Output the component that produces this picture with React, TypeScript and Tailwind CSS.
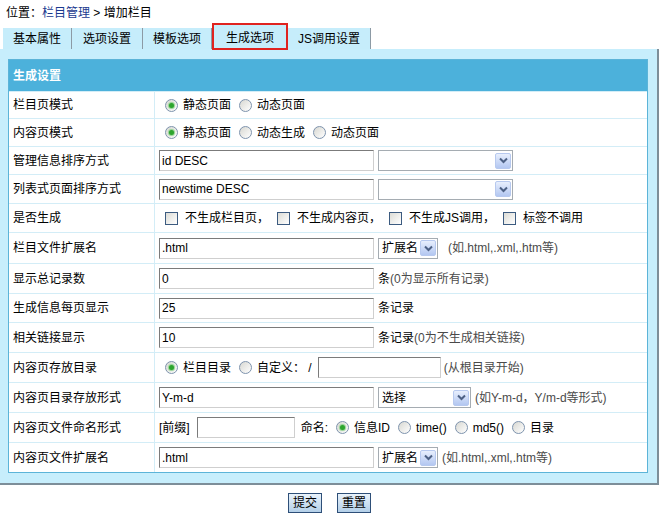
import React from "react";

const Radio = ({ checked = false }: { checked?: boolean }) => (
  <span className="inline-flex items-center justify-center w-[13px] h-[13px] rounded-full border border-[#7e93ad] bg-gradient-to-br from-[#d8d8d2] to-[#ffffff] shrink-0">
    {checked && <span className="w-[5px] h-[5px] rounded-full bg-[#2ea52e] shadow-[0_0_1px_1px_#8fd18f]" />}
  </span>
);

const Checkbox = () => (
  <span className="inline-block w-[13px] h-[13px] border border-[#3c5b80] bg-gradient-to-br from-[#dcdcd6] to-[#ffffff] shrink-0" />
);

const Chevron = () => (
  <span className="flex items-center justify-center w-[16px] h-[16px] rounded-[2px] border border-[#b7c9ef] bg-gradient-to-b from-[#e8effd] to-[#b3c7f1] shrink-0">
    <svg width="9" height="7" viewBox="0 0 9 7">
      <path d="M1 1.5 L4.5 5 L8 1.5" fill="none" stroke="#4d6185" strokeWidth="2" />
    </svg>
  </span>
);

const TextInput = ({ value = "", w }: { value?: string; w: string }) => (
  <input
    readOnly
    value={value}
    className={`${w} h-[21px] px-[2px] text-[12px] text-black bg-white border border-t-[#7b7b7b] border-l-[#7b7b7b] border-b-[#cfcfcf] border-r-[#cfcfcf] outline-none shrink-0`}
  />
);

const Select = ({ text = "", w }: { text?: string; w: string }) => (
  <span className={`${w} h-[21px] flex items-center bg-white border border-[#a5acb2] pl-[3px] pr-[1px] shrink-0`}>
    <span className="flex-1 leading-[14px]">{text}</span>
    <Chevron />
  </span>
);

const Hint = ({ children }: { children: React.ReactNode }) => (
  <span className="text-[#4a4a4a]">{children}</span>
);

const Row = ({ label, h, children }: { label: string; h: string; children: React.ReactNode }) => (
  <div className={`flex ${h} border-t border-[#d3edf7]`}>
    <div className="w-[146px] pl-[4px] flex items-center border-r border-[#d3edf7] shrink-0">{label}</div>
    <div className="flex-1 flex items-center pl-[4px]">{children}</div>
  </div>
);

const Opt = ({ checked, text, first }: { checked?: boolean; text: string; first?: boolean }) => (
  <span className={`flex items-center ${first ? "ml-[6px]" : "ml-[8px]"}`}>
    <Radio checked={checked} />
    <span className="ml-[5px] whitespace-pre">{text}</span>
  </span>
);

const Chk = ({ text, first }: { text: string; first?: boolean }) => (
  <span className={`flex items-center ${first ? "ml-[6px]" : "ml-[8px]"}`}>
    <Checkbox />
    <span className="ml-[7px]">{text}</span>
  </span>
);

const Tab = ({ text, w }: { text: string; w: string }) => (
  <div className={`${w} h-[21px] flex items-center justify-center bg-[#c6edfb] border-r border-[#8c9aa5] shadow-[1px_0_0_#ffffff]`}>
    {text}
  </div>
);

export default function App() {
  return (
    <div className="w-[664px] h-[515px] bg-white text-[12px] text-black font-['Liberation_Sans','Noto_Sans_CJK_SC',sans-serif] overflow-hidden">
      <div className="h-[23px] pl-[6px] pt-[5px] leading-[16px]">
        位置：<span className="text-[#1b3a8f]">栏目管理</span> &gt; 增加栏目
      </div>
      <div className="flex items-end h-[26px] pl-[3px]">
        <Tab text="基本属性" w="w-[69px]" />
        <Tab text="选项设置" w="w-[71px]" />
        <Tab text="模板选项" w="w-[69px]" />
        <div className="relative z-10 -mb-[1px] w-[76px] h-[27px] flex items-start justify-center pt-[4px] bg-[#c6edfb] border-2 border-[#e0231f]">
          生成选项
        </div>
        <Tab text="JS调用设置" w="w-[83px]" />
      </div>
      <div className="w-[659px] bg-[#c7eefc] border-r-2 border-b-2 border-[#7d8e99] pt-[10px] pb-[10px] pl-[8px]">
        <div className="w-[640px] border border-[#5cb4d8] bg-white">
          <div className="h-[31px] bg-[#4cb1db] text-white font-bold flex items-center pl-[4px]">生成设置</div>
          <Row label="栏目页模式" h="h-[27px]">
            <Opt first checked text="静态页面" />
            <Opt text="动态页面" />
          </Row>
          <Row label="内容页模式" h="h-[28px]">
            <Opt first checked text="静态页面" />
            <Opt text="动态生成" />
            <Opt text="动态页面" />
          </Row>
          <Row label="管理信息排序方式" h="h-[28px]">
            <TextInput value="id DESC" w="w-[215px]" />
            <span className="ml-[4px]"><Select w="w-[135px]" /></span>
          </Row>
          <Row label="列表式页面排序方式" h="h-[29px]">
            <TextInput value="newstime DESC" w="w-[215px]" />
            <span className="ml-[4px]"><Select w="w-[135px]" /></span>
          </Row>
          <Row label="是否生成" h="h-[29px]">
            <Chk first text="不生成栏目页，" />
            <Chk text="不生成内容页，" />
            <Chk text="不生成JS调用，" />
            <Chk text="标签不调用" />
          </Row>
          <Row label="栏目文件扩展名" h="h-[31px]">
            <TextInput value=".html" w="w-[215px]" />
            <span className="ml-[4px]"><Select text="扩展名" w="w-[60px]" /></span>
            <span className="ml-[10px]"><Hint>(如.html,.xml,.htm等)</Hint></span>
          </Row>
          <Row label="显示总记录数" h="h-[30px]">
            <TextInput value="0" w="w-[215px]" />
            <span className="ml-[4px]">条<Hint>(0为显示所有记录)</Hint></span>
          </Row>
          <Row label="生成信息每页显示" h="h-[29px]">
            <TextInput value="25" w="w-[215px]" />
            <span className="ml-[4px]">条记录</span>
          </Row>
          <Row label="相关链接显示" h="h-[30px]">
            <TextInput value="10" w="w-[215px]" />
            <span className="ml-[4px]">条记录<Hint>(0为不生成相关链接)</Hint></span>
          </Row>
          <Row label="内容页存放目录" h="h-[30px]">
            <Opt first checked text="栏目目录" />
            <Opt text="自定义： /" />
            <span className="ml-[6px]"><TextInput w="w-[123px]" /></span>
            <span className="ml-[3px]"><Hint>(从根目录开始)</Hint></span>
          </Row>
          <Row label="内容页目录存放形式" h="h-[30px]">
            <TextInput value="Y-m-d" w="w-[215px]" />
            <span className="ml-[4px]"><Select text="选择" w="w-[93px]" /></span>
            <span className="ml-[4px]"><Hint>(如Y-m-d，Y/m-d等形式)</Hint></span>
          </Row>
          <Row label="内容页文件命名形式" h="h-[30px]">
            <span>[前缀]</span>
            <span className="ml-[7px]"><TextInput w="w-[98px]" /></span>
            <span className="ml-[6px]">命名:</span>
            <Opt checked text="信息ID" />
            <Opt text="time()" />
            <Opt text="md5()" />
            <Opt text="目录" />
          </Row>
          <Row label="内容页文件扩展名" h="h-[30px]">
            <TextInput value=".html" w="w-[215px]" />
            <span className="ml-[4px]"><Select text="扩展名" w="w-[60px]" /></span>
            <span className="ml-[4px]"><Hint>(如.html,.xml,.htm等)</Hint></span>
          </Row>
        </div>
      </div>
      <div className="flex justify-center gap-[15px] pt-[8px] w-[659px]">
        <button className="w-[34px] h-[20px] border border-[#2e4f78] bg-gradient-to-b from-[#eaf3fb] to-[#b3cfe8] text-[12px] leading-[16px]">提交</button>
        <button className="w-[34px] h-[20px] border border-[#2e4f78] bg-gradient-to-b from-[#eaf3fb] to-[#b3cfe8] text-[12px] leading-[16px]">重置</button>
      </div>
    </div>
  );
}
